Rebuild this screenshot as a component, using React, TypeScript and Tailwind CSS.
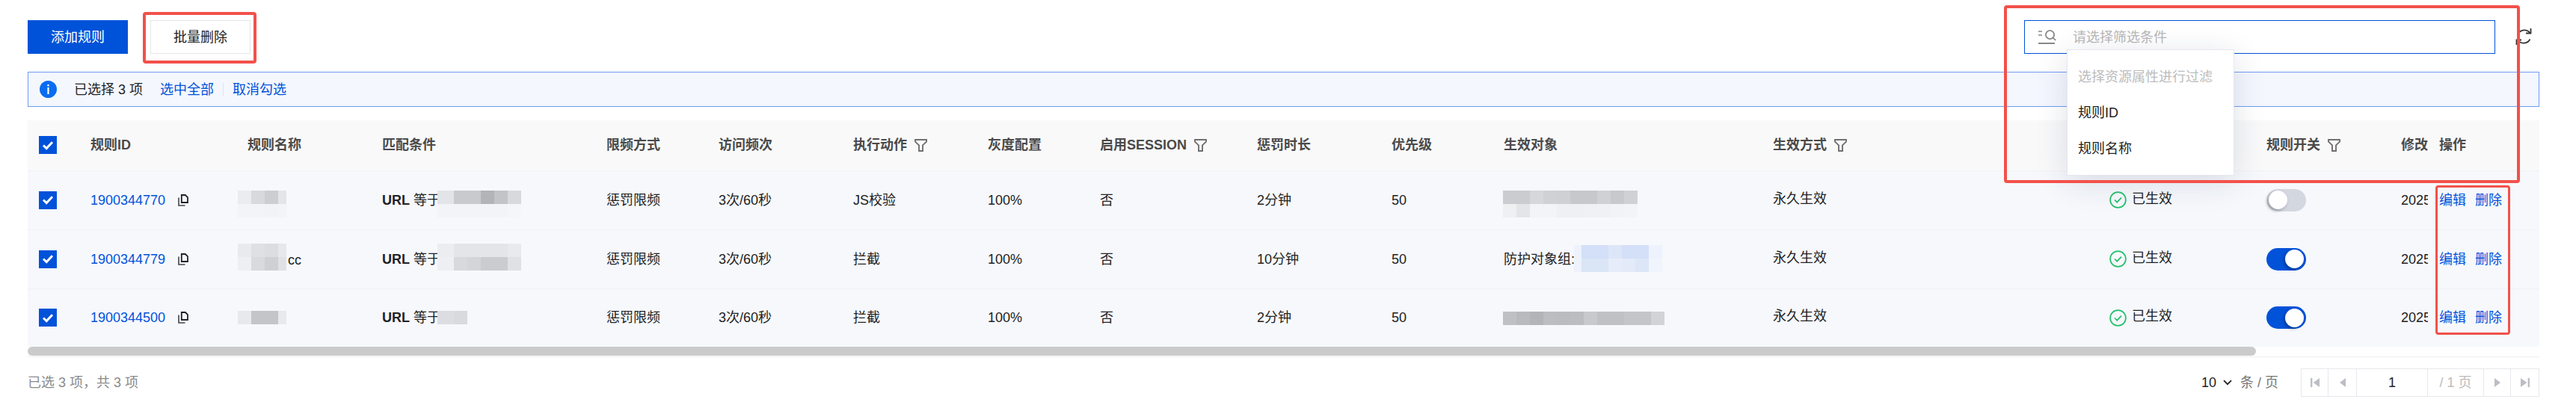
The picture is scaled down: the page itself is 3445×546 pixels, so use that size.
import React from "react";

type MosaicData = { w: number[]; rows: string[][]; cls?: string };

function Mosaic({ w, rows, cls = "" }: MosaicData) {
  return (
    <div className={`flex flex-col shrink-0 ${cls}`}>
      {rows.map((r, i) => (
        <div key={i} className="flex h-[18px]">
          {r.map((c, j) => (
            <div key={j} className="h-[18px]" style={{ width: w[j], background: c }} />
          ))}
        </div>
      ))}
    </div>
  );
}

function Check() {
  return (
    <span className="flex h-6 w-6 items-center justify-center bg-[#0052d9]">
      <svg width="16" height="13" viewBox="0 0 16 13" fill="none">
        <path d="M2 6.5 6.2 10.5 14 2.2" stroke="#fff" strokeWidth="3" />
      </svg>
    </span>
  );
}

function Funnel() {
  return (
    <svg width="17" height="17" viewBox="0 0 17 17" fill="none" className="ml-[10px] shrink-0">
      <path d="M1 1h15v2.6L11 8.4V16H6V8.4L1 3.6z" stroke="#707070" strokeWidth="1.9" />
    </svg>
  );
}

function Copy() {
  return (
    <svg width="14" height="16" viewBox="0 0 14 16" fill="none" className="ml-[17px] shrink-0">
      <path d="M4.8 1h5l3.2 3.2V11H4.8z" stroke="#222" strokeWidth="1.8" />
      <path d="M1 4.5V15h8.5" stroke="#444" strokeWidth="1.6" />
    </svg>
  );
}

function Status() {
  return (
    <div className="flex items-center">
      <svg width="23" height="23" viewBox="0 0 23 23" fill="none" className="shrink-0">
        <circle cx="11.5" cy="11.5" r="10.4" stroke="#23c16b" strokeWidth="1.7" />
        <path d="M7 11.5l3.2 3.2L16 8.6" stroke="#23c16b" strokeWidth="1.7" />
      </svg>
      <span className="ml-[7px] -translate-y-[2px]">已生效</span>
    </div>
  );
}

function Toggle({ on }: { on: boolean }) {
  return (
    <div
      className={`flex h-[30px] w-[53px] items-center rounded-full px-[3px] ${
        on ? "justify-end bg-[#0052d9]" : "justify-start bg-[#d3d7e0]"
      }`}
    >
      <div className="h-[25px] w-[25px] rounded-full bg-white shadow-[-2px_2px_4px_rgba(0,0,0,0.3)]" />
    </div>
  );
}

function Th({ children, cls = "" }: { children?: React.ReactNode; cls?: string }) {
  return (
    <th className={`overflow-hidden whitespace-nowrap pl-[15px] text-left align-middle font-semibold text-[#4a4a4a] ${cls}`}>
      {children}
    </th>
  );
}

function Td({ children, cls = "" }: { children?: React.ReactNode; cls?: string }) {
  return <td className={`overflow-hidden whitespace-nowrap pl-[15px] align-middle ${cls}`}>{children}</td>;
}

function FilterHead({ label }: { label: string }) {
  return (
    <div className="flex items-center">
      <span>{label}</span>
      <Funnel />
    </div>
  );
}

const data = [
  {
    id: "1900344770",
    h: "h-[79px]",
    name: { w: [18, 18, 18, 11], rows: [["#ebecf0", "#d8d9dc", "#cdced2", "#e4e5e9"], ["#f3f4f8", "#f3f4f8", "#f2f3f7", "#f3f4f8"]], cls: "translate-y-[5px]" },
    nameSuffix: "",
    match: { w: [22, 18, 18, 18, 18, 18], rows: [["#e3e4e7", "#c9cacd", "#c9cacd", "#b3b4b7", "#c3c4c7", "#d8d9dd"], ["#f3f4f8", "#f3f4f8", "#f3f4f8", "#f3f4f8", "#f3f4f8", "#f5f6fa"]], cls: "translate-y-[5px]" },
    action: "JS校验",
    dur: "2分钟",
    target: "",
    tgt: { w: [18, 18, 18, 18, 18, 18, 18, 18, 18, 18], rows: [["#cbcccf", "#cbcccf", "#d6d7da", "#d0d1d5", "#cfd0d4", "#c7c8cc", "#c7c8cc", "#d0d1d4", "#c8c9cc", "#d0d1d5"], ["#eff0f2", "#e4e5e8", "#f3f4f7", "#f3f4f7", "#eff0f4", "#eff0f4", "#f0f1f5", "#f0f1f5", "#f2f3f6", "#f3f4f7"]], cls: "translate-y-[5px]" },
    on: false,
  },
  {
    id: "1900344779",
    h: "h-[79px]",
    name: { w: [18, 18, 18, 11], rows: [["#e9eaee", "#dfe0e4", "#dcdde1", "#e7e8ec"], ["#eeeff2", "#d9dade", "#cfd0d4", "#e0e1e5"]], cls: "-translate-y-[3px]" },
    nameSuffix: "cc",
    match: { w: [22, 18, 18, 18, 18, 18], rows: [["#ecedf0", "#e4e5e9", "#e4e5e9", "#e4e5e9", "#e4e5e9", "#e9eaee"], ["#eeeff2", "#d8d9dc", "#d4d5d9", "#cbccd0", "#cbccd0", "#e0e1e5"]], cls: "-translate-y-[3px]" },
    action: "拦截",
    dur: "10分钟",
    target: "防护对象组:",
    tgt: { w: [10, 18, 18, 18, 18, 18, 18], rows: [["#edf2fc", "#d3e0f7", "#d3e0f7", "#dce6f8", "#d3e0f7", "#d3e0f7", "#edf2fc"], ["#edf2fc", "#dae5f6", "#dae5f6", "#e6ecf9", "#e3eaf8", "#dce6f7", "#f0f4fc"]], cls: "-translate-y-[1px]" },
    on: true,
  },
  {
    id: "1900344500",
    h: "h-[78px]",
    name: { w: [18, 18, 18, 11], rows: [["#e8e9ed", "#c4c5c8", "#c4c5c8", "#e8e9ed"]], cls: "" },
    nameSuffix: "",
    match: { w: [22, 18], rows: [["#dcdde0", "#d9dadd"]], cls: "" },
    action: "拦截",
    dur: "2分钟",
    target: "",
    tgt: { w: [18, 18, 18, 18, 18, 18, 18, 18, 18, 18, 18, 18], rows: [["#bfc0c4", "#b9babe", "#b3b4b8", "#bcbdc1", "#bbbcc0", "#bcbdc1", "#c8c9cc", "#c0c1c4", "#c0c1c4", "#c4c5c8", "#c4c5c8", "#d2d3d6"]], cls: "translate-y-[1px]" },
    on: true,
  },
];

function PageBtn({ d, w, bar }: { d: string; w: string; bar?: "l" | "r" }) {
  return (
    <div className={`flex h-full items-center justify-center border-r border-[#e7e8ee] ${w}`}>
      <svg width="12" height="12" viewBox="0 0 12 12" fill="#bcbec4">
        <path d={d} />
        {bar === "l" && <rect x="0" y="0" width="2.4" height="12" />}
        {bar === "r" && <rect x="9.6" y="0" width="2.4" height="12" />}
      </svg>
    </div>
  );
}

export default function App() {
  return (
    <div
      className="relative h-[546px] w-[3445px] overflow-hidden bg-white pl-[37px] pr-[49px] pt-[27px] text-[18px] leading-[24px] text-[#222]"
      style={{ fontFamily: '"Liberation Sans", "Noto Sans CJK SC", sans-serif' }}
    >
      {/* Toolbar */}
      <div className="flex h-[45px] items-start justify-between">
        <div className="flex gap-[30px]">
          <button className="flex h-[45px] w-[134px] items-center justify-center bg-[#0052d9] text-white">添加规则</button>
          <button className="flex h-[45px] w-[134px] items-center justify-center border border-[#e4e5ea] bg-white text-[#222]">批量删除</button>
        </div>
        <div className="flex items-start pr-[10px]">
          <div className="relative z-20 flex h-[45px] w-[630px] items-center border border-[#0052d9] bg-white pl-[18px]">
            <svg width="24" height="20" viewBox="0 0 24 20" fill="none" className="shrink-0">
              <path d="M0 2h5M0 7h5" stroke="#888" strokeWidth="1.7" />
              <circle cx="15.5" cy="6.5" r="5.6" stroke="#888" strokeWidth="1.8" />
              <path d="M19.6 10.6l3.6 3.2" stroke="#888" strokeWidth="1.8" />
              <path d="M0 18h22" stroke="#888" strokeWidth="2" />
            </svg>
            <span className="ml-[22px] text-[#b8b8b8]">请选择筛选条件</span>
            <div className="absolute left-[56px] top-[38px] h-[169px] w-[224px] border border-[#e6e7f0] bg-white px-[14px] py-[12px] shadow-[0_8px_40px_rgba(30,40,80,0.14)]">
              <div className="flex h-12 items-center text-[#bcbcbc]">选择资源属性进行过滤</div>
              <div className="flex h-12 items-center">规则ID</div>
              <div className="flex h-12 items-center">规则名称</div>
            </div>
          </div>
          <svg width="22" height="24" viewBox="0 0 22 24" fill="none" className="ml-[27px] mt-[10px]" stroke="#333" strokeWidth="1.8">
            <path d="M3.5 8.5A9.5 9.5 0 0 1 19.5 7" />
            <path d="M20.5 1v6.5H14" />
            <path d="M19.5 15.5A9.5 9.5 0 0 1 3.5 17" />
            <path d="M1.5 23v-6.5H8" />
          </svg>
        </div>
      </div>

      {/* Alert */}
      <div className="mt-[24px] flex h-[47px] items-center border border-[#6f9cf3] bg-[#f4f7fe] pl-[15px]">
        <svg width="23" height="23" viewBox="0 0 23 23" className="shrink-0">
          <circle cx="11.5" cy="11.5" r="11.5" fill="#0a6cf0" />
          <rect x="10.4" y="5" width="2.2" height="2.4" fill="#fff" />
          <rect x="10.4" y="9" width="2.2" height="9" fill="#fff" />
        </svg>
        <span className="ml-[23px]">已选择 3 项</span>
        <span className="ml-[23px] text-[#0052d9]">选中全部</span>
        <span className="mx-[12px] h-[18px] w-px bg-[#dfe4ee]" />
        <span className="text-[#0052d9]">取消勾选</span>
      </div>

      {/* Table */}
      <table className="mt-[18px] w-[3359px] table-fixed border-collapse">
        <colgroup>
          <col className="w-[69px]" />
          <col className="w-[210px]" />
          <col className="w-[180px]" />
          <col className="w-[300px]" />
          <col className="w-[150px]" />
          <col className="w-[180px]" />
          <col className="w-[180px]" />
          <col className="w-[150px]" />
          <col className="w-[210px]" />
          <col className="w-[180px]" />
          <col className="w-[150px]" />
          <col className="w-[360px]" />
          <col className="w-[450px]" />
          <col className="w-[210px]" />
          <col className="w-[180px]" />
          <col className="w-[51px]" />
          <col className="w-[149px]" />
        </colgroup>
        <thead>
          <tr className="h-[67px] border-b border-[#f0f1f4] bg-[#f9f9fa]">
            <Th><Check /></Th>
            <Th>规则ID</Th>
            <Th>规则名称</Th>
            <Th>匹配条件</Th>
            <Th>限频方式</Th>
            <Th>访问频次</Th>
            <Th><FilterHead label="执行动作" /></Th>
            <Th>灰度配置</Th>
            <Th><FilterHead label="启用SESSION" /></Th>
            <Th>惩罚时长</Th>
            <Th>优先级</Th>
            <Th>生效对象</Th>
            <Th><FilterHead label="生效方式" /></Th>
            <Th>规则状态</Th>
            <Th><FilterHead label="规则开关" /></Th>
            <Th>修改时间</Th>
            <Th cls="shadow-[-4px_0_6px_rgba(0,0,0,0.03)]">操作</Th>
          </tr>
        </thead>
        <tbody>
          {data.map((r) => (
            <tr key={r.id} className={`${r.h} border-b border-[#f0f2f7] bg-[#f6f8fc] last:border-b-0`}>
              <Td><Check /></Td>
              <Td>
                <div className="flex items-center">
                  <span className="text-[#0052d9]">{r.id}</span>
                  <Copy />
                </div>
              </Td>
              <Td>
                <div className="-ml-[13px] flex items-center">
                  <Mosaic {...r.name} />
                  {r.nameSuffix && <span className="ml-[2px] translate-y-[1px]">{r.nameSuffix}</span>}
                </div>
              </Td>
              <Td>
                <div className="flex items-center">
                  <span className="font-bold">URL</span>
                  <span className="ml-[5px]">等于</span>
                  <Mosaic {...r.match} cls={`-ml-[4px] ${r.match.cls}`} />
                </div>
              </Td>
              <Td>惩罚限频</Td>
              <Td>3次/60秒</Td>
              <Td>{r.action}</Td>
              <Td>100%</Td>
              <Td>否</Td>
              <Td>{r.dur}</Td>
              <Td>50</Td>
              <Td>
                <div className="flex items-center">
                  {r.target && <span className="mr-[-3px]">{r.target}</span>}
                  <Mosaic {...r.tgt} cls={`${r.target ? "ml-[2px]" : "-ml-px"} ${r.tgt.cls}`} />
                </div>
              </Td>
              <Td><span className="inline-block -translate-y-[2px]">永久生效</span></Td>
              <Td><Status /></Td>
              <Td><Toggle on={r.on} /></Td>
              <Td>2025-06-18 10:20:30</Td>
              <Td cls="shadow-[-4px_0_6px_rgba(0,0,0,0.03)]">
                <div className="flex gap-[12px] text-[#0052d9]">
                  <span>编辑</span>
                  <span>删除</span>
                </div>
              </Td>
            </tr>
          ))}
        </tbody>
      </table>

      {/* Scrollbar */}
      <div className="h-[14px] w-[3359px] border-b border-[#eeeff2]">
        <div className="h-[12px] w-[2980px] rounded-full bg-[#cbcbcb]" />
      </div>

      {/* Footer */}
      <div className="mt-[15px] flex h-[38px] items-center justify-between">
        <span className="text-[#8a8a8a]">已选 3 项，共 3 项</span>
        <div className="flex h-full items-center">
          <span>10</span>
          <svg width="12" height="8" viewBox="0 0 12 8" fill="none" className="ml-[9px]">
            <path d="M1 1.2l5 5 5-5" stroke="#222" strokeWidth="1.8" />
          </svg>
          <span className="ml-[11px] text-[#777]">条 / 页</span>
          <div className="ml-[30px] flex h-[38px] w-[319px] items-center border border-[#e7e8ee]">
            <PageBtn d="M12 0v12L3.6 6z" w="w-[36px]" bar="l" />
            <PageBtn d="M10 0v12L2 6z" w="w-[38px]" />
            <div className="flex h-full w-[95px] items-center justify-center border-r border-[#e7e8ee]">1</div>
            <div className="flex h-full w-[75px] items-center justify-center border-r border-[#e7e8ee] text-[#bbb]">/ 1 页</div>
            <PageBtn d="M2 0v12L10 6z" w="w-[36px]" />
            <div className="flex h-full flex-1 items-center justify-center">
              <svg width="12" height="12" viewBox="0 0 12 12" fill="#bcbec4">
                <path d="M0 0v12L8.4 6z" />
                <rect x="9.6" y="0" width="2.4" height="12" />
              </svg>
            </div>
          </div>
        </div>
      </div>

      {/* Red annotation frames */}
      <div className="pointer-events-none absolute left-[191px] top-[16px] z-30 h-[69px] w-[152px] rounded-[4px] border-[4px] border-[#f2514a]" />
      <div className="pointer-events-none absolute left-[2680px] top-[7px] z-30 h-[238px] w-[690px] rounded-[4px] border-[4px] border-[#f2514a]" />
      <div className="pointer-events-none absolute left-[3257px] top-[248px] z-30 h-[200px] w-[100px] rounded-[4px] border-[3px] border-[#f2514a]" />
    </div>
  );
}
